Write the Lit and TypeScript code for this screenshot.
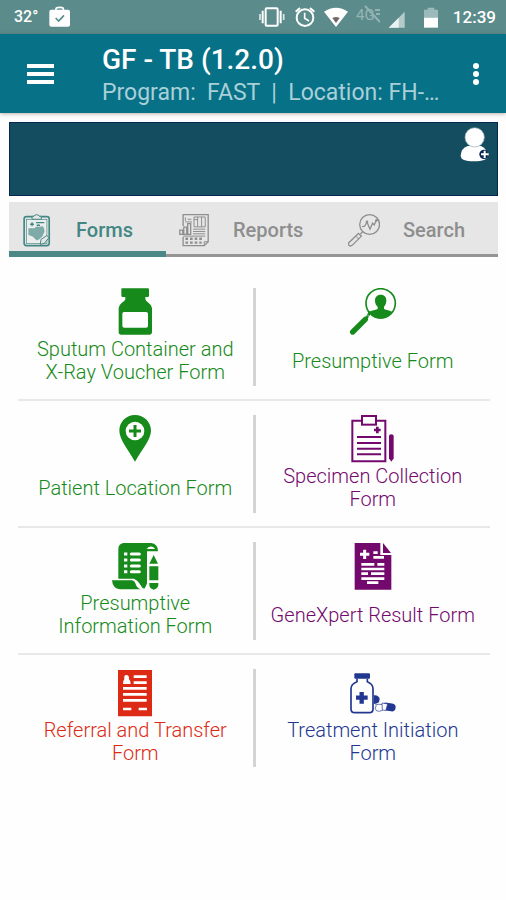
import { LitElement, html, css, svg, TemplateResult } from "lit";
import { customElement, property, state } from "lit/decorators.js";

interface FormItem {
  label: string;
  tone: "green" | "purple" | "red" | "blue";
  box: string;
  art: TemplateResult;
}

const bottle = svg`
  <path fill="currentColor" fill-rule="evenodd" d="M366 40H444Q447 40 447 44V62Q447 66 443 66H436V72Q436 77 446 84Q456 91 456 99V172Q456 179 449 179H364Q356 179 356 172V99Q356 91 365 84Q376 77 376 72V66H368Q364 66 364 62V44Q364 40 366 40ZM372 111Q367 111 367 116V152Q367 158 373 158H438Q444 158 444 152V116Q444 111 438 111Z"/>`;

const personLens = svg`
  <circle cx="381" cy="85" r="44" fill="none" stroke="currentColor" stroke-width="5"/>
  <path fill="currentColor" d="M381 59C392 59 399 66 398 77C398 86 394 91 391 95V102C398 106 409 106 416 111C407 124 395 131 381 131C367 131 354 124 346 111C354 106 365 106 372 102V95C368 91 364 86 364 77C364 66 370 59 381 59Z"/>
  <path d="M350 110L338 131" stroke="currentColor" stroke-width="8"/>
  <path d="M335 133L297 171" stroke="currentColor" stroke-width="16" stroke-linecap="round"/>
  <path d="M341 119L349 128" stroke="#fff" stroke-width="2"/>`;

const pin = svg`
  <path fill="currentColor" d="M405 45C432 45 453 66 453 92C453 118 424 151 405 185C386 151 358 118 358 92C358 66 378 45 405 45Z"/>
  <circle cx="405" cy="93" r="28" fill="#fff"/>
  <path d="M405 75V111M387 93H423" stroke="currentColor" stroke-width="9"/>`;

const clipboard = svg`
  <path d="M325 62H296V184H395V62H367" fill="none" stroke="currentColor" stroke-width="6"/>
  <rect x="325" y="48" width="42" height="26" fill="#fff" stroke="currentColor" stroke-width="6"/>
  <path d="M371 80V100M361 90H381" stroke="currentColor" stroke-width="8"/>
  <path d="M310 111H382M310 129H382M310 146H382M310 163H382" stroke="currentColor" stroke-width="6"/>
  <path d="M406 108Q406 103 413 103Q420 103 420 108V175L413 185L406 175Z" fill="currentColor"/>`;

const scroll = svg`
  <path fill="currentColor" d="M370 39H453Q474 41 474 64H441V160Q438 170 433 176Q427 176 422 166Q413 150 401 146H355V58Q355 41 370 39Z"/>
  <path fill="#fff" d="M440 57Q446 47 457 50Q464 53 465 57Z"/>
  <path fill="currentColor" d="M336 151H396Q404 152 408 165Q413 177 425 178H360Q338 176 336 151Z"/>
  <path d="M372 72H382M372 90H382M372 108H382M372 125H382" stroke="#fff" stroke-width="9"/>
  <path d="M394 72H418M394 90H418M394 108H418M394 125H418" stroke="#fff" stroke-width="9" stroke-linecap="round"/>
  <path fill="currentColor" d="M461 75L474 101H448ZM448 109H475V151H448ZM448 159H475V166Q472 177 461 179Q450 177 448 166Z"/>`;

const resultSheet = svg`
  <path fill="currentColor" d="M303 39H380V75H413V179H303Z"/>
  <path fill="currentColor" d="M388 39L412 69H388Z"/>
  <path d="M333 59V87M319 73H347" stroke="#fff" stroke-width="9"/>
  <path d="M359 68H372M359 82H391M323 103H362M371 103H392M323 117H392M323 131H343M352 131H392M323 146H392M340 158H374" stroke="#fff" stroke-width="8"/>`;

const referral = svg`
  <path fill="currentColor" d="M354 45H456V184H354Z"/>
  <path fill="#fff" d="M379 60Q388 60 387 73Q392 77 392 87H369Q369 77 373 73Q371 60 379 60Z"/>
  <path d="M401 65H440M401 83H440M369 100H440M369 118H440M369 136H440M369 162H394M416 162H441" stroke="#fff" stroke-width="8"/>`;

const medicine = svg`
  <rect x="302" y="55" width="47" height="16" rx="3" fill="currentColor"/>
  <path d="M310 71V80Q292 87 292 101V162Q292 173 303 173H347Q358 173 358 162V101Q358 87 341 80V71" fill="none" stroke="currentColor" stroke-width="5"/>
  <path d="M324 111V146M307 128H342" stroke="currentColor" stroke-width="13"/>
  <path d="M361 121Q374 119 378 132L376 142Q369 147 361 147Z" fill="currentColor"/>
  <path d="M364 150Q374 146 389 149M368 152Q361 160 368 167Q376 172 389 165" fill="none" stroke="currentColor" stroke-width="2"/>
  <rect x="386" y="144" width="40" height="24" rx="12" fill="currentColor" transform="rotate(8 406 156)"/>
  <path d="M385 144L402 147L396 167L386 164Z" fill="#fff" stroke="currentColor" stroke-width="2"/>`;

const FORMS: FormItem[] = [
  { label: "Sputum Container and X-Ray Voucher Form", tone: "green", box: "333 39 144 144", art: bottle },
  { label: "Presumptive Form", tone: "green", box: "286 39 144 144", art: personLens },
  { label: "Patient Location Form", tone: "green", box: "333 45 144 144", art: pin },
  { label: "Specimen Collection Form", tone: "purple", box: "286 45 144 144", art: clipboard },
  { label: "Presumptive Information Form", tone: "green", box: "333 36 144 144", art: scroll },
  { label: "GeneXpert Result Form", tone: "purple", box: "286 36 144 144", art: resultSheet },
  { label: "Referral and Transfer Form", tone: "red", box: "333 42 144 144", art: referral },
  { label: "Treatment Initiation Form", tone: "blue", box: "286 42 144 144", art: medicine },
];

const formsIcon = svg`
  <rect x="72" y="302" width="76" height="88" rx="7" fill="none" stroke="currentColor" stroke-width="5"/>
  <rect x="79" y="310" width="62" height="73" fill="#eceeee" stroke="currentColor" stroke-width="2"/>
  <path d="M96 310V301H102Q104 296 110 296Q116 296 118 301H124V310Z" fill="#e6e6e6" stroke="currentColor" stroke-width="3"/>
  <path d="M96 319V331M90 325H102M108 320H133M110 328H120" stroke="currentColor" stroke-width="4"/>
  <path d="M85 337H103Q109 330 116 333L128 331Q135 336 134 347L128 361Q120 372 110 374L98 362L85 358Z" fill="currentColor" opacity=".65"/>
  <path d="M121 386L123 371L141 359L147 366L133 383Z" fill="#e6e6e6" stroke="currentColor" stroke-width="3"/>`;

const reportsIcon = svg`
  <path d="M546 330V296H622V378L610 390H546V364" fill="none" stroke="currentColor" stroke-width="4"/>
  <path d="M553 304V315M560 310H571M553 318H573M579 303H613V333H579ZM590 303V333M602 303V333M579 311H590" fill="none" stroke="currentColor" stroke-width="3"/>
  <path d="M536 343H545V356H536ZM548 334H557V356H548ZM560 323H569V356H560Z" fill="none" stroke="currentColor" stroke-width="4"/>
  <path d="M576 340H613M576 347H613M576 354H613" stroke="currentColor" stroke-width="3"/>
  <path d="M553 369H605M553 381H602" stroke="currentColor" stroke-width="7" stroke-dasharray="8 6"/>
  <path d="M546 361H613M610 389V378H621" fill="none" stroke="currentColor" stroke-width="3"/>`;

const searchIcon = svg`
  <circle cx="350" cy="326" r="30" fill="none" stroke="currentColor" stroke-width="4"/>
  <path d="M327 332L335 331L342 318L351 340L359 322L364 327L371 312" fill="none" stroke="currentColor" stroke-width="4"/>
  <circle cx="342" cy="318" r="4" fill="currentColor"/><circle cx="371" cy="313" r="4" fill="currentColor"/>
  <path d="M329 348L322 355" stroke="currentColor" stroke-width="4"/>
  <path d="M316 353L287 381Q284 386 288 389Q292 393 297 389L325 361Z" fill="none" stroke="currentColor" stroke-width="4"/>
  <path d="M308 361L317 370" stroke="currentColor" stroke-width="3"/>`;

const TABS = [
  { id: "forms", label: "Forms", box: "63 294 96 100", art: formsIcon },
  { id: "reports", label: "Reports", box: "531 294 96 100", art: reportsIcon },
  { id: "search", label: "Search", box: "285 294 96 100", art: searchIcon },
];

@customElement("status-bar")
export class StatusBar extends LitElement {
  static styles = css`
    :host {
      display: flex;
      align-items: center;
      height: 34px;
      padding: 0 10px 0 14px;
      background: #5b8c8b;
      color: #fff;
      font: 500 16px/20px Roboto, sans-serif;
    }
    svg { display: block; flex: none; }
    .bag { margin-left: 11px; }
    .right { display: flex; align-items: center; gap: 8px; margin-left: auto; }
    .battery { margin: 0 7px 0 10px; }
    .time { font-size: 17px; }
  `;

  render() {
    return html`
      <span>32°</span>
      <svg class="bag" width="22" height="24" viewBox="147 16 66 72">
        <path d="M168 31V27Q168 23 180 23Q190 23 190 27V31" fill="none" stroke="#fff" stroke-width="5"/>
        <rect x="148" y="30" width="62" height="51" rx="6" fill="#fff"/>
        <path d="M167 55L176 64L192 47" fill="none" stroke="#5b8c8b" stroke-width="5"/>
      </svg>
      <div class="right">
        <svg width="28" height="24" viewBox="16 16 84 72">
          <rect x="39" y="26" width="36" height="52" rx="3" fill="none" stroke="#fff" stroke-width="6"/>
          <path d="M30 33V71M84 33V71" stroke="#fff" stroke-width="6"/>
          <path d="M22 43V61M93 43V61" stroke="#fff" stroke-width="5" opacity=".8"/>
        </svg>
        <svg width="22" height="24" viewBox="123 16 66 72">
          <circle cx="156" cy="54" r="25" fill="none" stroke="#fff" stroke-width="6"/>
          <path d="M128 36L141 25M184 36L171 25" stroke="#fff" stroke-width="6"/>
          <path d="M155 39V56L168 64" fill="none" stroke="#fff" stroke-width="5"/>
        </svg>
        <svg width="24" height="24" viewBox="215 16 72 72">
          <path d="M215 36Q251 12 287 36L251 82Z" fill="#fff"/>
          <path d="M240 55Q251 49 262 55L251 70Z" fill="#74676a"/>
        </svg>
        <svg width="24" height="24" viewBox="0 0 24 24" opacity=".35">
          <text x="0" y="15" font-size="15" font-weight="400" fill="#fff">4G</text>
          <path d="M9 1L24 17M19 5H24M20 9H24" stroke="#fff" stroke-width="2"/>
        </svg>
        <svg width="18" height="24" viewBox="405 16 54 72">
          <path d="M407 84L455 36V84Z" fill="#fff" opacity=".55"/>
          <path d="M407 84L437 54V84Z" fill="#fff" opacity=".75"/>
        </svg>
        <svg class="battery" width="14" height="24" viewBox="517 16 42 72">
          <path d="M517 30H528V24H548V30H559V54H517Z" fill="#fff" opacity=".4"/>
          <path d="M517 54H559V84H517Z" fill="#fff"/>
        </svg>
        <span class="time">12:39</span>
      </div>
    `;
  }
}

@customElement("app-bar")
export class AppBar extends LitElement {
  static styles = css`
    :host {
      display: flex;
      align-items: center;
      min-height: 79px;
      padding: 0 10px 0 20px;
      box-sizing: border-box;
      background: #077187;
      color: #fff;
      font-family: Roboto, sans-serif;
      box-shadow: 0 1px 4px rgba(60, 30, 30, 0.35);
    }
    button {
      flex: none;
      display: grid;
      place-items: center;
      width: 40px;
      height: 48px;
      padding: 0;
      border: 0;
      background: none;
      color: inherit;
    }
    .titles { flex: 1; min-width: 0; margin-left: 42px; padding-top: 5px; }
    h1 { margin: 0; font-size: 28px; line-height: 34px; font-weight: 500; }
    p {
      margin: 0;
      font-size: 23px;
      line-height: 32px;
      color: #a9d0d8;
      white-space: pre;
      overflow: hidden;
    }
  `;

  render() {
    return html`
      <button aria-label="Menu">
        <svg width="27" height="20" viewBox="0 0 27 20">
          <path d="M0 2H27M0 10H27M0 18H27" stroke="#fff" stroke-width="4"/>
        </svg>
      </button>
      <div class="titles">
        <h1>GF - TB (1.2.0)</h1>
        <p>Program:  FAST  |  Location: FH-…</p>
      </div>
      <button aria-label="More options">
        <svg width="8" height="24" viewBox="0 0 8 24" fill="#fff">
          <circle cx="4" cy="4" r="3"/><circle cx="4" cy="12" r="3"/><circle cx="4" cy="20" r="3"/>
        </svg>
      </button>
    `;
  }
}

@customElement("form-tile")
export class FormTile extends LitElement {
  @property({ attribute: false }) item!: FormItem;

  static styles = css`
    :host { display: block; }
    .tile {
      display: flex;
      flex-direction: column;
      align-items: center;
      width: 100%;
      min-height: 98px;
      padding: 0 12px;
      border: 0;
      background: none;
      font: 300 20px/23px Roboto, sans-serif;
    }
    svg { display: block; flex: none; }
    .label { flex: 1; display: flex; align-items: center; text-align: center; }
    .green { color: #168a1a; }
    .purple { color: #74096d; }
    .red { color: #dc2a14; }
    .blue { color: #223790; }
  `;

  render() {
    const { label, tone, box, art } = this.item;
    return html`
      <button class="tile ${tone}">
        <svg width="48" height="48" viewBox=${box} aria-hidden="true">${art}</svg>
        <span class="label">${label}</span>
      </button>
    `;
  }
}

@customElement("app-root")
export class AppRoot extends LitElement {
  @state() private tab = "forms";

  static styles = css`
    :host {
      display: block;
      min-height: 100vh;
      background: #fefefe;
      font-family: Roboto, sans-serif;
    }
    main { padding: 9px 8px 0 9px; }
    .banner {
      display: flex;
      justify-content: flex-end;
      align-items: flex-start;
      box-sizing: border-box;
      height: 74px;
      padding: 4px 7px;
      border: 1px solid #06274f;
      background: #144d60;
    }
    .add {
      padding: 0;
      border: 0;
      background: none;
    }
    .add svg, .tab svg { display: block; flex: none; }
    .tabs {
      display: grid;
      grid-template-columns: 157fr 170fr 162fr;
      margin-top: 6px;
      background: #e6e6e6;
    }
    .tab {
      display: flex;
      align-items: center;
      gap: 23px;
      height: 55px;
      padding: 4px 0 0 12px;
      border: 0;
      border-bottom: 3px solid #959595;
      background: none;
      color: #8e8e8e;
      font: 500 20px/24px Roboto, sans-serif;
    }
    .tab.active { color: #438783; border-bottom: 6px solid #4c8886; padding-top: 7px; }
    .grid { margin: 17px 8px 0 9px; }
    .row {
      display: grid;
      grid-template-columns: 1fr 3px 1fr;
      padding: 14px 0 13px;
      border-bottom: 2px solid #e8e8e8;
    }
    .row:last-child { border-bottom: 0; }
    .rule { background: #d4d4d4; }
  `;

  render() {
    const rows = [0, 2, 4, 6].map((i) => FORMS.slice(i, i + 2));
    return html`
      <status-bar></status-bar>
      <app-bar></app-bar>
      <main>
        <div class="banner">
          <button class="add" aria-label="Add patient">
            <svg width="30" height="36" viewBox="622 36 90 108">
              <path d="M645 93Q625 100 624 122Q624 139 664 139Q704 139 704 122Q703 100 685 93Z" fill="#fff"/>
              <circle cx="666" cy="67" r="29" fill="#fff" stroke="#8fa9b3" stroke-width="2"/>
              <circle cx="694" cy="118" r="14" fill="#06274f"/>
              <path d="M704 100H712V136H704Z" fill="#144d60"/>
              <path d="M696 107V129M685 118H708" stroke="#fff" stroke-width="6"/>
            </svg>
          </button>
        </div>
        <div class="tabs" role="tablist">
          ${TABS.map(
            (t) => html`
              <button
                class="tab ${t.id === this.tab ? "active" : ""}"
                role="tab"
                aria-selected=${t.id === this.tab}
                @click=${() => (this.tab = t.id)}
              >
                <svg width="32" height="33" viewBox=${t.box} aria-hidden="true">${t.art}</svg>
                <span>${t.label}</span>
              </button>
            `
          )}
        </div>
        <div class="grid">
          ${rows.map(
            ([a, b]) => html`
              <div class="row">
                <form-tile .item=${a}></form-tile>
                <div class="rule"></div>
                <form-tile .item=${b}></form-tile>
              </div>
            `
          )}
        </div>
      </main>
    `;
  }
}
